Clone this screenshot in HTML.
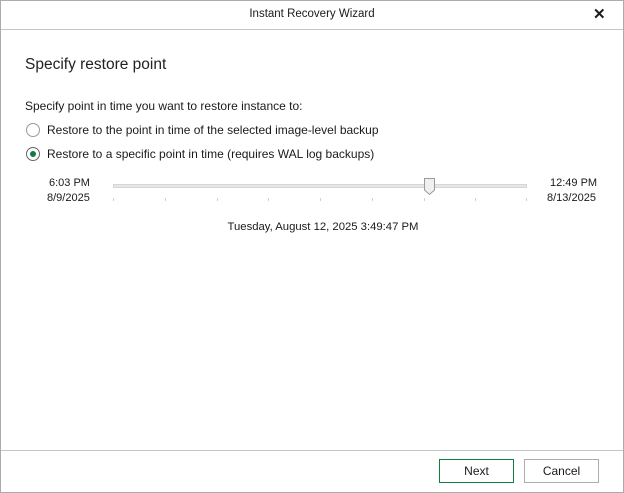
<!DOCTYPE html>
<html><head><style>
*{margin:0;padding:0;box-sizing:border-box}
body{width:624px;height:493px;background:#fff;font-family:"Liberation Sans",sans-serif;font-size:11px;color:#1a1a1a;position:relative;overflow:hidden}
.win{position:absolute;left:0;top:0;width:624px;height:493px;border:1px solid #ababab}
.t{position:absolute;white-space:nowrap}
.b{font-size:12px}
.hl{position:absolute;left:1px;right:1px;height:1px;background:#c4c4c4}
.radio{position:absolute;width:14px;height:14px;border:1px solid #999;border-radius:50%;background:#fff}
.radio.on::after{content:"";position:absolute;left:3px;top:3px;width:6px;height:6px;border-radius:50%;background:#107c41}
.btn{position:absolute;top:459px;width:75px;height:24px;border:1px solid #adadad;text-align:center;line-height:22px;font-size:12px;background:#fff}
.tick{position:absolute;top:198px;width:1px;height:3px;background:#d0d0d0}
</style></head><body>
<div class="win"></div>
<div class="t" style="left:0;width:624px;text-align:center;top:8px;font-size:11.5px">Instant Recovery Wizard</div>
<div class="t" style="left:593px;top:5px;font-size:15px;font-weight:bold">✕</div>
<div class="hl" style="top:29px"></div>
<div class="t" style="left:25px;top:56px;font-size:15.5px;color:#222">Specify restore point</div>
<div class="t b" style="left:25px;top:99px">Specify point in time you want to restore instance to:</div>
<div class="radio" style="left:26px;top:123px"></div>
<div class="t b" style="left:47px;top:123px">Restore to the point in time of the selected image-level backup</div>
<div class="radio on" style="left:26px;top:147px;border-color:#666"></div>
<div class="t b" style="left:47px;top:147px">Restore to a specific point in time (requires WAL log backups)</div>
<div class="t" style="left:49px;top:177px;text-align:center">6:03 PM</div>
<div class="t" style="left:47px;top:192px">8/9/2025</div>
<div class="t" style="left:550px;top:177px">12:49 PM</div>
<div class="t" style="left:547px;top:192px">8/13/2025</div>
<div style="position:absolute;left:113px;top:184px;width:414px;height:4px;background:#e6e6e6;border:1px solid #d6d6d6"></div>
<div class="tick" style="left:113px"></div><div class="tick" style="left:165px"></div><div class="tick" style="left:217px"></div><div class="tick" style="left:268px"></div><div class="tick" style="left:320px"></div><div class="tick" style="left:372px"></div><div class="tick" style="left:424px"></div><div class="tick" style="left:475px"></div><div class="tick" style="left:526px"></div>
<svg style="position:absolute;left:423px;top:177px" width="14" height="19"><path d="M1.5 1.5H11.5V13L6.5 17.5L1.5 13Z" fill="#f0f0f0" stroke="#9a9a9a"/></svg>
<div class="t" style="left:0;width:646px;text-align:center;top:221px;font-size:11.3px">Tuesday, August 12, 2025 3:49:47 PM</div>
<div class="hl" style="top:450px"></div>
<div class="btn" style="left:439px;border-color:#107c41">Next</div>
<div class="btn" style="left:524px">Cancel</div>
</body></html>
